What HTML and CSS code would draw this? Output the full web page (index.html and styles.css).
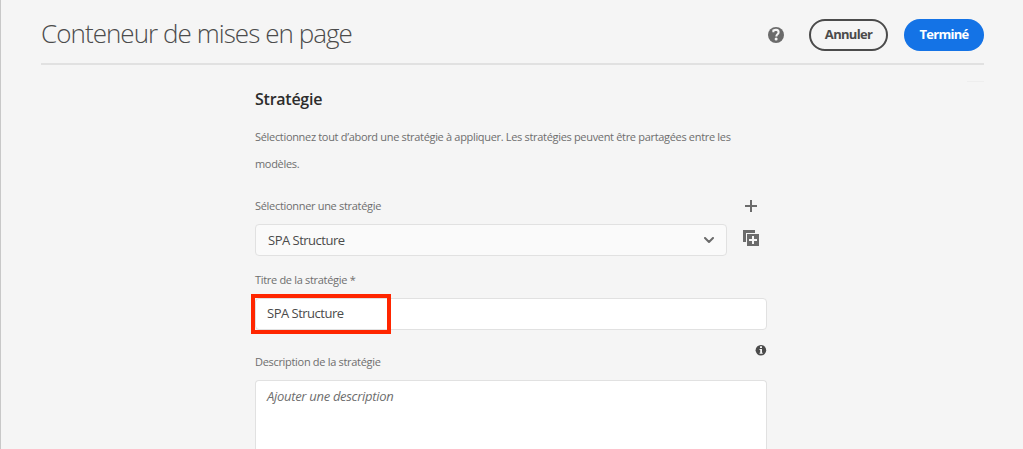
FILE: index.html
```html
<!DOCTYPE html>
<html lang="fr">
<head>
<meta charset="utf-8">
<title>Conteneur de mises en page</title>
<link rel="stylesheet" href="styles.css">
</head>
<body>
<header class="header">
  <h1 class="title">Conteneur de mises en page</h1>
  <div class="actions">
    <svg class="help" width="16" height="16" viewBox="0 0 16 16"><circle cx="8" cy="8" r="8" fill="#6b6b6b"/><path d="M5.4 5.2V3.4Q6.8 2.8 8.2 2.9Q10.6 3.1 10.6 5.2Q10.6 6.5 9.2 7.5Q8.4 8.1 8.4 9.4" fill="none" stroke="#f5f5f5" stroke-width="2.1"/><circle cx="8.1" cy="12.1" r="1.5" fill="#f5f5f5"/></svg>
    <button class="button cancel">Annuler</button>
    <button class="button done">Terminé</button>
  </div>
</header>
<div class="tick"></div>
<main class="form">
  <h2 class="section">Stratégie</h2>
  <p class="intro">Sélectionnez tout d’abord une stratégie à appliquer. Les stratégies peuvent être partagées entre les<br>modèles.</p>
  <div class="row label-row">
    <label class="label select-label">Sélectionner une stratégie</label>
    <svg class="plus" width="12" height="12" viewBox="0 0 12 12"><path d="M6 0V12M0 6H12" stroke="#6b6b6b" stroke-width="2"/></svg>
  </div>
  <div class="row">
    <div class="select"><span class="value">SPA Structure</span>
      <svg width="10" height="7" viewBox="0 0 10 7"><path d="M1 1L5 5L9 1" fill="none" stroke="#6b6b6b" stroke-width="2" stroke-linecap="round" stroke-linejoin="round"/></svg>
    </div>
    <svg class="copy" width="16" height="16" viewBox="0 0 16 16"><path d="M0 0H12V3H3V12H0Z" fill="#6b6b6b"/><path d="M4 4H16V16H4Z" fill="#6b6b6b"/><path d="M10 6V14M6 10H14" stroke="#f5f5f5" stroke-width="2"/></svg>
  </div>
  <label class="label name-label">Titre de la stratégie *</label>
  <div class="input"><span class="value">SPA Structure</span><div class="highlight"></div></div>
  <div class="row desc-row">
    <label class="label desc-label">Description de la stratégie</label>
    <svg class="info" width="12" height="11" viewBox="0 0 12 11"><circle cx="5.9" cy="5.2" r="5.3" fill="#4b4b4b"/><path d="M5 1.2H7V3.1H5ZM4.5 4.1H7V7.8H7.7V8.8H4.5V7.8H5.2V5.1H4.5Z" fill="#f5f5f5"/></svg>
  </div>
  <div class="textarea"><span class="placeholder">Ajouter une description</span></div>
</main>
</body>
</html>
```
FILE: styles.css
```css
* { box-sizing: border-box; }
body {
  margin: 0;
  height: 449px;
  border-left: 1px solid #c8c8c8;
  background: #f5f5f5;
  color: #4b4b4b;
  font-family: "Open Sans", "Noto Sans", sans-serif;
}
.header {
  display: flex;
  justify-content: space-between;
  height: 65px;
  margin: 0 39px 0 40px;
  border-bottom: 2px solid #e1e1e1;
}
.title {
  margin: 0;
  padding-top: 14px;
  font-size: 26px;
  line-height: 38px;
  font-weight: 300;
  letter-spacing: -.95px;
  white-space: nowrap;
}
.actions { display: flex; padding-top: 19px; }
.help { margin: 8px 25px 0 0; }
.button {
  height: 32px;
  padding: 0 0 2px;
  border-radius: 16px;
  font: 700 13px/28px "Open Sans", sans-serif;
  letter-spacing: -.7px;
}
.cancel { width: 79px; margin-right: 16px; border: 2px solid #4b4b4b; background: none; color: #4b4b4b; line-height: 26px; }
.done { width: 80px; border: 0; background: #1473e6; color: #fff; }
.tick { width: 17px; height: 1px; margin: 16px 39px 0 auto; background: #eee; }
.form { width: 512px; margin-left: 254px; }
.section {
  margin: 6px 0 0;
  color: #2c2c2c;
  font-size: 16px;
  line-height: 22px;
  font-weight: 600;
  letter-spacing: -.25px;
}
.intro {
  margin: 13px 0 0;
  color: #6e6e6e;
  font-size: 11px;
  line-height: 27px;
  letter-spacing: -.32px;
  white-space: nowrap;
}
.row { display: flex; }
.label {
  color: #6e6e6e;
  font-size: 11px;
  line-height: 18px;
  letter-spacing: -.31px;
}
.label-row { justify-content: space-between; height: 47px; padding-top: 20px; }
.plus { margin: 3px 10px 0 0; }
.select {
  display: flex;
  align-items: center;
  justify-content: space-between;
  width: 472px;
  height: 32px;
  padding: 0 12px;
  border: 1px solid #e1e1e1;
  border-radius: 4px;
  background: #fafafa;
}
.value { font-size: 13px; line-height: 18px; letter-spacing: -.5px; }
.copy { margin: 6px 0 0 16px; }
.name-label { display: block; margin: 15px 0 9px; }
.input {
  position: relative;
  height: 32px;
  padding: 5px 11px;
  border: 1px solid #e1e1e1;
  border-radius: 4px;
  background: #fff;
}
.input .value { display: block; }
.highlight {
  position: absolute;
  top: -5px;
  left: -5px;
  width: 140px;
  height: 40px;
  border: 4px solid #ff2600;
}
.desc-row { justify-content: space-between; height: 50px; }
.desc-label { margin-top: 23px; }
.info { margin-top: 15px; overflow: visible; }
.textarea {
  height: 69px;
  padding: 6px 11px;
  border: 1px solid #e1e1e1;
  border-bottom: 0;
  border-radius: 4px 4px 0 0;
  background: #fff;
  color: #6e6e6e;
}
.placeholder { display: block; font-size: 13px; line-height: 18px; font-style: italic; letter-spacing: -.3px; }
```
